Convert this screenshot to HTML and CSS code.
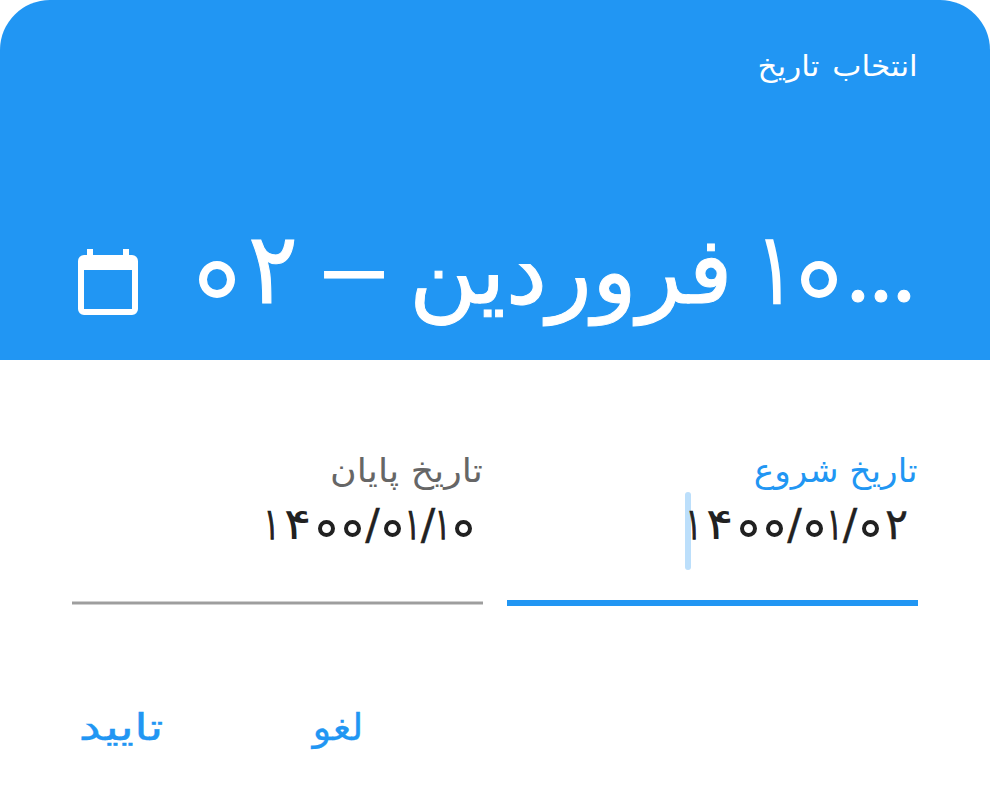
FILE: index.html
```html
<!DOCTYPE html>
<html lang="fa" dir="rtl">
<head>
<meta charset="utf-8">
<title>انتخاب تاریخ</title>
<link rel="stylesheet" href="styles.css">
</head>
<body>
<main class="dialog">
  <header class="header">
    <div class="caption"><span>انتخاب تاریخ</span></div>
    <div class="headline">
      <h1 class="range" dir="ltr"><span class="zero">۰</span><span class="two">۲</span><span class="dash">–</span><span class="month">فروردین</span><span class="one">۱</span><span class="zero">۰</span><span class="dots">...</span></h1>
      <svg class="calendar" viewBox="0 0 60 67"><path fill="#fff" fill-rule="evenodd" d="M9 0h6v6h30V0h6v6h3a6 6 0 0 1 6 6v48a6 6 0 0 1-6 6H6a6 6 0 0 1-6-6V12a6 6 0 0 1 6-6h3zM6 21v39h48v-39z"/></svg>
    </div>
  </header>
  <section class="fields">
    <div class="field active">
      <label><span>تاریخ شروع</span></label>
      <div class="value" dir="ltr"><i class="caret"></i><span class="first"><b>۱</b></span><span class="four"><b>۴</b></span><span class="zero">۰</span><span class="zero">۰</span><span class="slash">/</span><span class="zero">۰</span><span class="one"><b>۱</b></span><span class="slash">/</span><span class="zero">۰</span><span class="two">۲</span></div>
      <div class="line"></div>
    </div>
    <div class="field">
      <label><span>تاریخ پایان</span></label>
      <div class="value" dir="ltr"><span class="first"><b>۱</b></span><span class="four"><b>۴</b></span><span class="zero">۰</span><span class="zero">۰</span><span class="slash">/</span><span class="zero">۰</span><span class="one"><b>۱</b></span><span class="slash">/</span><span class="one"><b>۱</b></span><span class="zero">۰</span></div>
      <div class="line"></div>
    </div>
  </section>
  <footer class="actions"><button class="cancel"><span>لغو</span></button><button class="confirm"><span>تایید</span></button></footer>
</main>
</body>
</html>
```
FILE: styles.css
```css
* { box-sizing: border-box; }
body { margin: 0; background: #fff; font-family: "DejaVu Sans", sans-serif; }
.dialog { width: 990px; height: 810px; overflow: hidden; }

.header { height: 360px; padding: 45px 72px 0 78px; border-radius: 50px 50px 0 0; background: #2196f3; color: #fff; }
.caption { height: 40px; font-size: 29px; line-height: 42px; word-spacing: 3px; }
.caption span { display: inline-block; transform: scaleX(1.07); transform-origin: right; }
.headline { display: flex; justify-content: space-between; align-items: flex-start; margin-top: 130px; height: 140px; }
.range { display: flex; width: 719px; margin: 0; font-size: 93px; font-weight: 400; line-height: 112px; -webkit-text-stroke: 1px #fff; }
.range > span { flex: none; white-space: nowrap; text-align: center; }
.range .zero { width: 36px; height: 37px; margin-top: 46px; border: 8px solid #fff; border-radius: 50%; color: transparent; -webkit-text-stroke: 0; font-size: 18px; line-height: 20px; }
.range .two { width: 46px; margin-left: 13px; transform: scaleY(1.07); transform-origin: 50% 87px; }
.range .dash { width: 58px; margin-left: 31px; line-height: 106px; transform: scaleX(1.56); -webkit-text-stroke: 1px #fff; }
.range .month { width: 316px; margin-left: 26px; }
.range .one { width: 30px; margin-left: 28px; transform: scale(.7, 1.06); transform-origin: 50% 87px; -webkit-text-stroke: 2.5px #fff; }
.range .one + .zero { margin-left: 18px; }
.range .dots { width: 66px; margin-left: 10px; line-height: 101px; font-family: Lato, sans-serif; letter-spacing: 1px; }
.calendar { width: 60px; height: 67px; margin-top: 34px; }

.fields { display: grid; grid-template-columns: 411px 411px; gap: 24px; padding: 90px 72px 0; }
.field { display: flex; flex-direction: column; height: 156px; }
label { height: 42px; font-size: 33px; line-height: 42px; color: #666; }
label span { display: inline-block; transform: scaleX(1.1); transform-origin: right; }
.active label { color: #2196f3; }
.active label span { transform: scaleX(1.04); }
.value { display: flex; justify-content: flex-end; height: 78px; padding-right: 7px; font-size: 43px; line-height: 65px; color: #212121; -webkit-text-stroke: .4px #212121; }
.active .value { padding-right: 8px; }
.value span { display: flex; justify-content: center; flex: none; }
.value b { font-weight: 400; transform: scaleX(.6); -webkit-text-stroke: 1.4px #212121; }
.value .first { width: 18px; }
.value .four { width: 33px; }
.value .four b { transform: scaleX(1.2); -webkit-text-stroke: 0; }
.value .one, .value .slash { width: 15px; }
.value .two { width: 27px; }
.value .zero { width: 17px; height: 17px; margin: 28px 4.5px 0 4px; border: 4px solid #212121; border-radius: 50%; color: transparent; font-size: 8px; line-height: 9px; -webkit-text-stroke: 0; }
.caret { width: 6px; height: 78px; margin-right: -5px; border-radius: 3px; background: #bcdffb; transform: translateX(1px); }
.line { height: 4px; margin-top: 31px; border: solid #cfcfcf; border-width: 1px 0; background: #9e9e9e; }
.active .line { height: 6px; margin-top: 30px; border: 0; background: #2196f3; }

.actions { display: flex; justify-content: flex-end; gap: 150px; padding: 91px 0 0 81px; }
button { padding: 0; border: 0; background: none; color: #2196f3; font: 37px/62px "DejaVu Sans", sans-serif; text-align: right; -webkit-text-stroke: .3px #2196f3; }
button span { display: inline-block; transform-origin: right; }
.cancel { width: 50px; }
.cancel span { transform: scaleX(1.05); }
.confirm { width: 82px; }
.confirm span { transform: scaleX(1.36); }
```
